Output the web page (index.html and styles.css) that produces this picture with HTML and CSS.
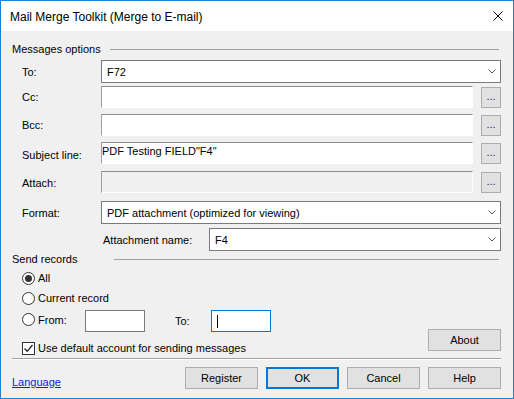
FILE: index.html
```html
<!DOCTYPE html>
<html lang="en">
<head>
    <meta charset="UTF-8">
    <title>Mail Merge Toolkit (Merge to E-mail)</title>
    <link rel="stylesheet" href="styles.css">
</head>
<body>
    <div class="window">
        <div class="titlebar">
            <span class="title">Mail Merge Toolkit (Merge to E-mail)</span>
            <svg class="close" width="10" height="10" viewBox="0 0 10 10"><path d="M0.5 0.5L9.5 9.5M9.5 0.5L0.5 9.5" stroke="#000" stroke-width="1" fill="none"/></svg>
        </div>

        <div class="content">
            <!-- Messages options -->
            <div class="group-head">
                <span class="group-label msg-label">Messages options</span>
                <span class="group-line"></span>
            </div>

            <div class="field-row row-to">
                <span class="label">To:</span>
                <div class="combo"><span class="combo-text">F72</span><svg class="chev" width="8" height="5" viewBox="0 0 8 5"><path d="M0.5 0.5L4 4L7.5 0.5" stroke="#555" fill="none"/></svg></div>
            </div>
            <div class="field-row row-cc">
                <span class="label">Cc:</span>
                <div class="edit"></div>
                <div class="dots">...</div>
            </div>
            <div class="field-row row-next">
                <span class="label">Bcc:</span>
                <div class="edit"></div>
                <div class="dots">...</div>
            </div>
            <div class="field-row row-next">
                <span class="label label-low">Subject line:</span>
                <div class="edit edit-multi">PDF Testing FIELD"F4"</div>
                <div class="dots">...</div>
            </div>
            <div class="field-row row-attach">
                <span class="label label-low1">Attach:</span>
                <div class="edit disabled"></div>
                <div class="dots">...</div>
            </div>
            <div class="field-row row-format">
                <span class="label">Format:</span>
                <div class="combo"><span class="combo-text">PDF attachment (optimized for viewing)</span><svg class="chev" width="8" height="5" viewBox="0 0 8 5"><path d="M0.5 0.5L4 4L7.5 0.5" stroke="#555" fill="none"/></svg></div>
            </div>
            <div class="field-row row-attname">
                <span class="label attname-label">Attachment name:</span>
                <div class="combo"><span class="combo-text">F4</span><svg class="chev" width="8" height="5" viewBox="0 0 8 5"><path d="M0.5 0.5L4 4L7.5 0.5" stroke="#555" fill="none"/></svg></div>
            </div>

            <!-- Send records -->
            <div class="group-head send-head">
                <span class="group-label send-label">Send records</span>
                <span class="group-line"></span>
            </div>

            <div class="records">
                <div class="records-left">
                    <div class="radio-row first">
                        <span class="radio checked"></span><span>All</span>
                    </div>
                    <div class="radio-row">
                        <span class="radio"></span><span>Current record</span>
                    </div>
                    <div class="from-row">
                        <div class="radio-item">
                            <span class="radio"></span><span>From:</span>
                        </div>
                        <div class="small-edit"></div>
                        <span class="to-label">To:</span>
                        <div class="small-edit focused"><span class="caret"></span></div>
                    </div>
                    <div class="check-row">
                        <span class="checkbox"><svg width="11" height="11" viewBox="0 0 11 11"><path d="M1.5 5.5L4.2 8.3L9.5 2" stroke="#222" stroke-width="1.3" fill="none"/></svg></span>
                        <span>Use default account for sending messages</span>
                    </div>
                </div>
                <button class="btn about">About</button>
            </div>

            <div class="separator"></div>

            <div class="footer">
                <a class="lang" href="#">Language</a>
                <div class="buttons">
                    <button class="btn">Register</button>
                    <button class="btn default">OK</button>
                    <button class="btn">Cancel</button>
                    <button class="btn">Help</button>
                </div>
            </div>
        </div>
    </div>
</body>
</html>
```

FILE: styles.css
```css
* {
    box-sizing: border-box;
    margin: 0;
    padding: 0;
}
body {
    font-family: 'Liberation Sans', Arial, sans-serif;
    font-size: 11px;
    color: #000;
    background: #fff;
}
.window {
    width: 514px;
    height: 399px;
    border: 1px solid #1883d7;
    background-color: #f0f0f0;
    display: flex;
    flex-direction: column;
}
.titlebar {
    height: 30px;
    background-color: #fff;
    display: flex;
    align-items: center;
    padding-left: 9px;
    padding-right: 10px;
}
.title {
    flex: 1;
    font-size: 12px;
    margin-top: 1px;
}
.close {
    display: block;
}
.content {
    display: flex;
    flex-direction: column;
    padding: 0 12px 0 10px;
}

/* group headings */
.group-head {
    display: flex;
    align-items: center;
    height: 14px;
    line-height: 14px;
    margin-top: 11px;
}
.group-label {
    padding-left: 1px;
}
.msg-label {
    width: 99px;
}
.send-label {
    width: 103px;
}
.group-line {
    flex: 1;
    height: 1px;
    background-color: #a0a0a0;
    margin-right: 2px;
}
.send-head {
    margin-top: 1px;
}

/* message fields */
.field-row {
    display: flex;
    align-items: center;
    height: 22px;
}
.row-to {
    margin-top: 4px;
    height: 23px;
}
.row-cc {
    margin-top: 3px;
}
.row-next {
    margin-top: 6px;
}
.row-attach {
    margin-top: 7px;
}
.row-format {
    margin-top: 8px;
    height: 23px;
}
.row-attname {
    margin-top: 4px;
    height: 23px;
}
.label {
    width: 90px;
    padding-left: 11px;
    flex-shrink: 0;
}
.label-low {
    margin-top: 4px;
}
.label-low1 {
    margin-top: 2px;
}
.attname-label {
    width: 198px;
    padding-left: 92px;
}
.combo {
    flex: 1;
    height: 23px;
    background-color: #fff;
    border: 1px solid #7a7a7a;
    display: flex;
    align-items: center;
    padding-left: 5px;
    padding-right: 4px;
}
.combo-text {
    flex: 1;
}
.chev {
    display: block;
}
.edit {
    flex: 1;
    height: 22px;
    background-color: #fff;
    border-style: solid;
    border-width: 1px;
    border-color: #8c8c8c #fff #fff #a0a0a0;
}
.edit-multi {
    padding: 1px 0 0 0;
    line-height: 15px;
}
.edit.disabled {
    background-color: #f0f0f0;
}
.dots {
    width: 20px;
    height: 21px;
    margin-left: 8px;
    align-self: flex-end;
    background-color: #e1e1e1;
    border: 1px solid #adadad;
    text-align: center;
    line-height: 17px;
    color: #1a1a6e;
}

/* send records */
.records {
    display: flex;
}
.records-left {
    flex: 1;
    display: flex;
    flex-direction: column;
    padding-left: 11px;
}
.radio-row {
    display: flex;
    align-items: center;
    height: 20px;
}
.radio-row.first {
    margin-top: 2px;
}
.radio {
    width: 13px;
    height: 13px;
    border: 1px solid #333;
    border-radius: 50%;
    background-color: #fff;
    margin-right: 3px;
    display: flex;
    align-items: center;
    justify-content: center;
    flex-shrink: 0;
}
.radio.checked::after {
    content: '';
    width: 7px;
    height: 7px;
    border-radius: 50%;
    background-color: #333;
}
.from-row {
    display: flex;
    align-items: center;
    height: 22px;
    margin-top: 2px;
}
.radio-item {
    display: flex;
    align-items: center;
    width: 63px;
    height: 13px;
    align-self: flex-start;
    margin-top: 3px;
}
.small-edit {
    width: 60px;
    height: 22px;
    background-color: #fff;
    border: 1px solid #7a7a7a;
    display: flex;
    align-items: center;
    padding-left: 5px;
}
.small-edit.focused {
    border-color: #0078d7;
}
.caret {
    width: 1px;
    height: 13px;
    background-color: #000;
}
.to-label {
    width: 36px;
    margin-left: 30px;
}
.check-row {
    display: flex;
    align-items: center;
    height: 16px;
    margin-top: 8px;
}
.checkbox {
    width: 13px;
    height: 13px;
    border: 1px solid #333;
    background-color: #fff;
    margin-right: 3px;
    display: flex;
    align-items: center;
    justify-content: center;
}
.checkbox svg {
    display: block;
}

/* buttons */
.btn {
    width: 73px;
    height: 22px;
    background-color: #e1e1e1;
    border: 1px solid #adadad;
    font-family: inherit;
    font-size: 11px;
    color: #000;
}
.btn.default {
    border: 2px solid #0078d7;
}
.about {
    width: 73px;
    align-self: flex-end;
    margin-bottom: 5px;
}
.separator {
    margin-top: 2px;
    margin-left: 1px;
    height: 2px;
    border-top: 1px solid #a0a0a0;
    border-bottom: 1px solid #fff;
}
.footer {
    display: flex;
    margin-top: 7px;
}
.lang {
    flex: 1;
    color: #0026d9;
    text-decoration: underline;
    line-height: 15px;
    margin-top: 8px;
    padding-left: 1px;
}
.buttons {
    display: flex;
    gap: 8px;
}
```
